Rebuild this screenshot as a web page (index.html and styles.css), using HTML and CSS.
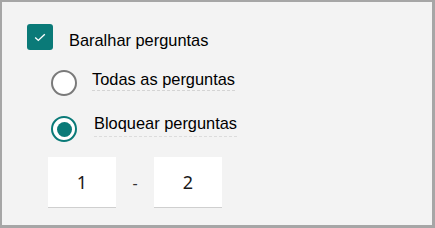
FILE: index.html
```html
<!DOCTYPE html>
<html lang="pt">
<head>
    <meta charset="UTF-8">
    <title>Baralhar perguntas</title>
    <link rel="stylesheet" href="styles.css">
</head>
<body>
    <div class="panel">
        <div class="option-row">
            <span class="checkbox checked">
                <svg width="12" height="9" viewBox="0 0 12 9"><path d="M1.2 4.6 L4.3 7.4 L10.8 1.3" fill="none" stroke="#fff" stroke-width="1.4"/></svg>
            </span>
            <span class="label label-main">Baralhar perguntas</span>
        </div>

        <div class="choices">
            <div class="option-row">
                <span class="radio"></span>
                <span class="label label-first">Todas as perguntas</span>
            </div>
            <div class="option-row">
                <span class="radio selected"><span class="dot"></span></span>
                <span class="label label-second">Bloquear perguntas</span>
            </div>
        </div>

        <div class="range">
            <div class="num-box">1</div>
            <span class="dash">-</span>
            <div class="num-box">2</div>
        </div>
    </div>
</body>
</html>
```

FILE: styles.css
```css
html, body {
    margin: 0;
    padding: 0;
}
body {
    width: 435px;
    height: 228px;
    font-family: "Liberation Sans", Arial, sans-serif;
    color: #000;
}
.panel {
    box-sizing: border-box;
    width: 435px;
    height: 228px;
    background: #f3f3f3;
    border: 2px solid #a6a6a6;
    border-right-width: 3px;
    border-bottom-width: 3px;
    padding: 22px 0 0 25px;
}
.option-row {
    display: flex;
    align-items: flex-start;
}
.checkbox {
    width: 26px;
    height: 26px;
    border-radius: 3px;
    background: #0a7a78;
    display: flex;
    align-items: center;
    justify-content: center;
}
.label {
    font-size: 16.4px;
    line-height: 18px;
}
.label-main {
    margin: 7px 0 0 16px;
}
.choices {
    margin: 20px 0 0 24px;
}
.choices .option-row + .option-row {
    margin-top: 20px;
}
.radio {
    box-sizing: border-box;
    width: 26px;
    height: 26px;
    border-radius: 50%;
    border: 2px solid #7a7a7a;
    background: #fff;
    display: flex;
    align-items: center;
    justify-content: center;
}
.radio.selected {
    border: 2.5px solid #0a7a78;
}
.dot {
    width: 15px;
    height: 15px;
    border-radius: 50%;
    background: #0a7a78;
}
.label-first {
    margin: 0 0 0 15px;
    padding-bottom: 2px;
    border-bottom: 1px dashed #d4d4d4;
}
.label-second {
    margin: -2px 0 0 17px;
    padding-bottom: 4px;
    border-bottom: 1px dashed #dcdcdc;
}
.range {
    display: flex;
    align-items: center;
    margin: 15px 0 0 21px;
}
.num-box {
    box-sizing: border-box;
    width: 68px;
    height: 51px;
    background: #fff;
    border-bottom: 1px solid #cfcfcf;
    display: flex;
    align-items: center;
    justify-content: center;
    font-family: "Noto Sans", "Open Sans", sans-serif;
    font-size: 18px;
    color: #1a1a1a;
}
.dash {
    width: 38px;
    text-align: center;
    font-family: "Noto Sans", sans-serif;
    font-size: 16px;
    color: #333;
}
```
